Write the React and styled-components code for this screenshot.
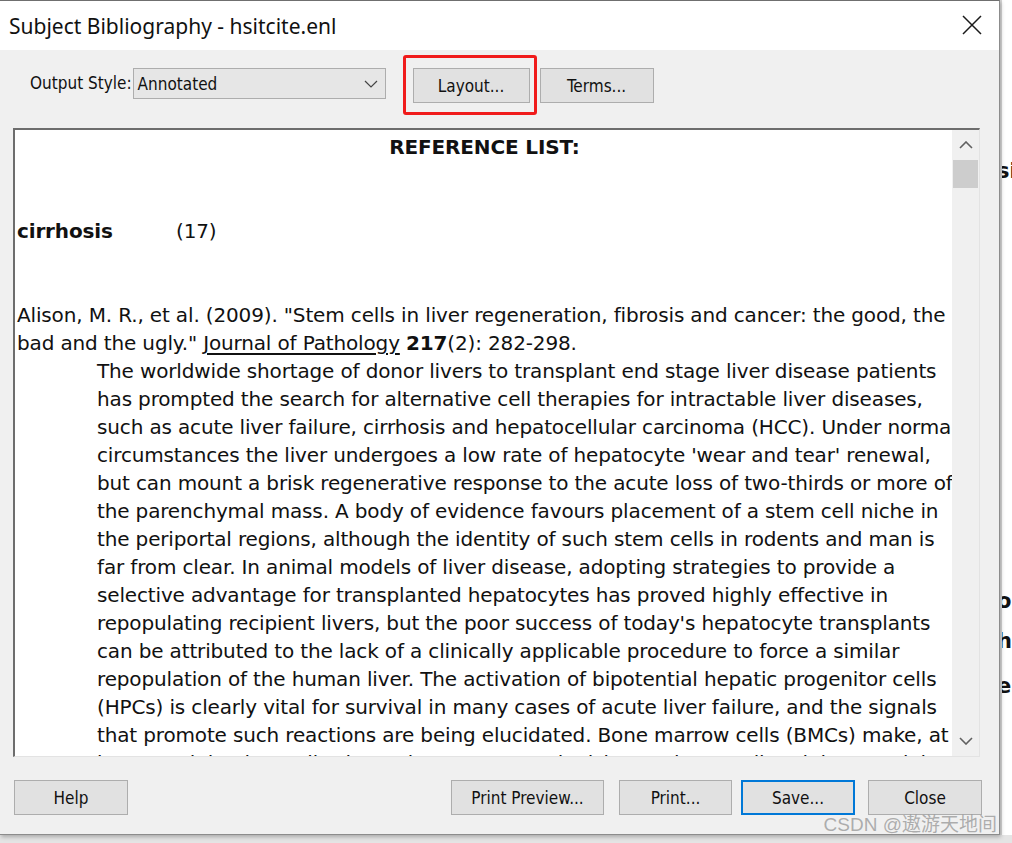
import styled, { createGlobalStyle } from "styled-components";

const GlobalStyle = createGlobalStyle`
  html, body {
    margin: 0;
    padding: 0;
    background: #ffffff;
    overflow: hidden;
  }
`;

const uiFont = `"Liberation Sans Narrow", "DejaVu Sans Condensed", "Liberation Sans", sans-serif`;
const docFont = `"DejaVu Sans", "Verdana", sans-serif`;

const abstractLines = [
  "The worldwide shortage of donor livers to transplant end stage liver disease patients",
  "has prompted the search for alternative cell therapies for intractable liver diseases,",
  "such as acute liver failure, cirrhosis and hepatocellular carcinoma (HCC). Under normal",
  "circumstances the liver undergoes a low rate of hepatocyte 'wear and tear' renewal,",
  "but can mount a brisk regenerative response to the acute loss of two-thirds or more of",
  "the parenchymal mass. A body of evidence favours placement of a stem cell niche in",
  "the periportal regions, although the identity of such stem cells in rodents and man is",
  "far from clear. In animal models of liver disease, adopting strategies to provide a",
  "selective advantage for transplanted hepatocytes has proved highly effective in",
  "repopulating recipient livers, but the poor success of today's hepatocyte transplants",
  "can be attributed to the lack of a clinically applicable procedure to force a similar",
  "repopulation of the human liver. The activation of bipotential hepatic progenitor cells",
  "(HPCs) is clearly vital for survival in many cases of acute liver failure, and the signals",
  "that promote such reactions are being elucidated. Bone marrow cells (BMCs) make, at",
  "best, a minimal contribution to hepatocyte replenishment in most liver injury models,",
];

export default function App() {
  return (
    <>
      <GlobalStyle />
      <Screen>
        <Row>
          <Dialog>
            <TitleBar>
              <TitleText>Subject Bibliography - hsitcite.enl</TitleText>
              <CloseButton aria-label="Close">
                <svg width="20" height="20" viewBox="0 0 20 20">
                  <path d="M1 1 L19 19 M19 1 L1 19" stroke="#1a1a1a" strokeWidth="1.5" fill="none" />
                </svg>
              </CloseButton>
            </TitleBar>

            <Body>
              <Toolbar>
                <Label>Output Style:</Label>
                <Select>
                  <span>Annotated</span>
                  <svg width="14" height="8" viewBox="0 0 14 8">
                    <path d="M1 1 L7 7 L13 1" stroke="#444" strokeWidth="1.2" fill="none" />
                  </svg>
                </Select>
                <Highlight>
                  <Button $width={117}>Layout...</Button>
                </Highlight>
                <Button $width={114}>Terms...</Button>
              </Toolbar>

              <Preview>
                <Document>
                  <Line $center $bold>REFERENCE LIST:</Line>
                  <Line />
                  <Line />
                  <Line>
                    <Term>cirrhosis</Term>(17)
                  </Line>
                  <Line />
                  <Line />
                  <Line>
                    Alison, M. R., et al. (2009). "Stem cells in liver regeneration, fibrosis and cancer: the good, the
                  </Line>
                  <Line>
                    bad and the ugly." <u>Journal of Pathology</u> <b>217</b>(2): 282-298.
                  </Line>
                  {abstractLines.map((t) => (
                    <Line key={t} $indent>
                      {t}
                    </Line>
                  ))}
                </Document>
                <ScrollBar>
                  <ScrollArrow>
                    <svg width="14" height="8" viewBox="0 0 14 8">
                      <path d="M1 7 L7 1 L13 7" stroke="#606060" strokeWidth="1.6" fill="none" />
                    </svg>
                  </ScrollArrow>
                  <Track>
                    <Thumb />
                  </Track>
                  <ScrollArrow>
                    <svg width="14" height="8" viewBox="0 0 14 8">
                      <path d="M1 1 L7 7 L13 1" stroke="#606060" strokeWidth="1.6" fill="none" />
                    </svg>
                  </ScrollArrow>
                </ScrollBar>
              </Preview>

              <Footer>
                <Button $width={114}>Help</Button>
                <ButtonGroup>
                  <Button $width={153} $mr={15}>Print Preview...</Button>
                  <Button $width={113} $mr={9}>Print...</Button>
                  <Button $width={114} $focused $mr={13}>Save...</Button>
                  <Button $width={114}>Close</Button>
                </ButtonGroup>
              </Footer>
              <Watermark>CSDN @遨游天地间</Watermark>
            </Body>
          </Dialog>

          <Behind>
            <Fragment $top={156}>si</Fragment>
            <Fragment $top={400}>o</Fragment>
            <Fragment $top={10}>h</Fragment>
            <Fragment $top={15}>e</Fragment>
          </Behind>
        </Row>
        <BottomStrip />
      </Screen>
    </>
  );
}

const Screen = styled.div`
  width: 1012px;
  height: 843px;
  display: flex;
  flex-direction: column;
  overflow: hidden;
`;

const Row = styled.div`
  display: flex;
  height: 835px;
`;

const Dialog = styled.div`
  width: 1000px;
  height: 835px;
  box-sizing: border-box;
  border-top: 1px solid #6f6f6f;
  border-right: 1px solid #8c8c8c;
  border-bottom: 1px solid #8c8c8c;
  display: flex;
  flex-direction: column;
  background: #f0f0f0;
  position: relative;
  z-index: 1;
  box-shadow: 1px 2px 4px rgba(0, 0, 0, 0.25);
`;

const TitleBar = styled.div`
  height: 49px;
  background: #ffffff;
  display: flex;
  align-items: center;
  justify-content: space-between;
  padding: 0 17px 0 9px;
`;

const TitleText = styled.div`
  font-family: "Noto Sans", "Open Sans", sans-serif;
  font-size: 21px;
  color: #111;
  margin-top: 0;
`;

const CloseButton = styled.div`
  width: 20px;
  height: 20px;
  display: flex;
  margin-top: -2px;
`;

const Body = styled.div`
  flex: 1;
  display: flex;
  flex-direction: column;
  position: relative;
`;

const Toolbar = styled.div`
  height: 78px;
  display: flex;
  align-items: flex-start;
  padding: 18px 0 0 30px;
  box-sizing: border-box;
`;

const Label = styled.div`
  font-family: ${uiFont};
  font-size: 17px;
  color: #111;
  line-height: 31px;
  margin-right: 1px;
`;

const Select = styled.div`
  width: 253px;
  height: 31px;
  box-sizing: border-box;
  background: #e6e6e6;
  border: 1px solid #adadad;
  display: flex;
  align-items: center;
  justify-content: space-between;
  padding: 0 7px 0 4px;
  font-family: ${uiFont};
  font-size: 17px;
  color: #111;
  margin-right: 27px;
`;

const Highlight = styled.div`
  position: relative;
  margin-right: 10px;

  &::after {
    content: "";
    position: absolute;
    left: -10px;
    top: -13px;
    right: -7px;
    bottom: -12px;
    border: 3px solid #f01b1b;
    border-radius: 3px;
  }
`;

const Button = styled.div`
  width: ${(p) => p.$width}px;
  height: 35px;
  box-sizing: border-box;
  background: #e1e1e1;
  border: ${(p) => (p.$focused ? "2px solid #0078d7" : "1px solid #adadad")};
  display: flex;
  align-items: center;
  justify-content: center;
  font-family: ${uiFont};
  font-size: 17px;
  color: #111;
  margin-right: ${(p) => (p.$mr != null ? p.$mr : 0)}px;
`;

const Preview = styled.div`
  height: 629px;
  margin: 0 19px 0 13px;
  box-sizing: border-box;
  border-top: 2px solid #6d6d6d;
  border-left: 2px solid #6d6d6d;
  border-right: 1px solid #e3e3e3;
  border-bottom: 1px solid #e3e3e3;
  background: #ffffff;
  display: flex;
  overflow: hidden;
`;

const Document = styled.div`
  flex: 1;
  padding: 3px 0 0 2px;
  overflow: hidden;
  font-family: ${docFont};
  font-size: 20px;
  letter-spacing: -0.15px;
  color: #111;
`;

const Line = styled.div`
  height: 28px;
  line-height: 28px;
  white-space: nowrap;
  text-align: ${(p) => (p.$center ? "center" : "left")};
  font-weight: ${(p) => (p.$bold ? "bold" : "normal")};
  padding-left: ${(p) => (p.$indent ? 80 : 0)}px;

  u {
    text-underline-offset: 3px;
  }
`;

const Term = styled.span`
  display: inline-block;
  width: 159px;
  font-weight: bold;
`;

const ScrollBar = styled.div`
  width: 27px;
  background: #f0f0f0;
  display: flex;
  flex-direction: column;
`;

const ScrollArrow = styled.div`
  height: 30px;
  display: flex;
  align-items: center;
  justify-content: center;
`;

const Track = styled.div`
  flex: 1;
  padding: 0 1px;
`;

const Thumb = styled.div`
  height: 28px;
  background: #cdcdcd;
`;

const Footer = styled.div`
  display: flex;
  justify-content: space-between;
  padding: 23px 17px 0 14px;
`;

const ButtonGroup = styled.div`
  display: flex;
`;

const Watermark = styled.div`
  position: absolute;
  right: 2px;
  bottom: -2px;
  font-family: "Liberation Sans", "Noto Sans CJK SC", sans-serif;
  font-size: 19px;
  color: rgba(150, 150, 150, 0.75);
  pointer-events: none;
`;

const Behind = styled.div`
  flex: 1;
  background: #ffffff;
  border-left: 2px solid #d6d6d6;
  display: flex;
  flex-direction: column;
  overflow: hidden;
`;

const Fragment = styled.div`
  margin-top: ${(p) => p.$top}px;
  margin-left: -5px;
  font-family: ${docFont};
  font-weight: bold;
  font-size: 21px;
  line-height: 30px;
  color: #111;
`;

const BottomStrip = styled.div`
  flex: 1;
  background: #e4e4e4;
`;
